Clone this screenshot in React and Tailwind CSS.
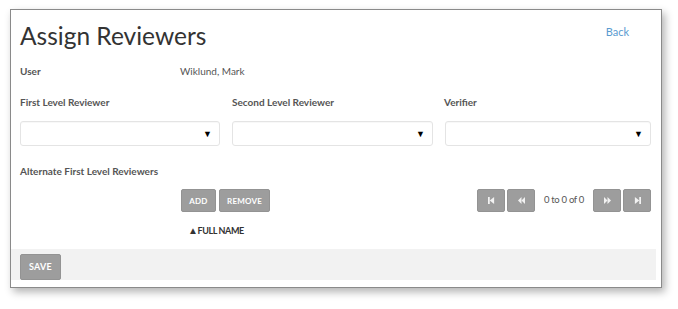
import React from 'react';

const font = { fontFamily: 'Lato, "Open Sans", sans-serif' };

const Select = ({ w }) => (
    <div className={`${w} h-[25px] rounded-[3px] border border-[#e4e4e4] bg-white flex items-center justify-end pr-[7px] shadow-[inset_0_1px_1px_rgba(0,0,0,0.03)]`}>
        <span className="text-[9px] leading-none text-black">▼</span>
    </div>
);

const GrayBtn = ({ children, className = '' }) => (
    <button className={`h-[23px] rounded-[2px] bg-[#9d9d9d] border border-[#939393] text-white text-[8px] font-bold tracking-[0.2px] flex items-center justify-center ${className}`}>
        {children}
    </button>
);

const PageIcon = ({ type }) => {
    const shapes = {
        first: (
            <>
                <rect x="0" y="0" width="2" height="8" />
                <polygon points="7,0 7,8 2,4" />
            </>
        ),
        prev: (
            <>
                <polygon points="4,0 4,8 0,4" />
                <polygon points="8,0 8,8 4,4" />
            </>
        ),
        next: (
            <>
                <polygon points="0,0 0,8 4,4" />
                <polygon points="4,0 4,8 8,4" />
            </>
        ),
        last: (
            <>
                <polygon points="1,0 1,8 6,4" />
                <rect x="6" y="0" width="2" height="8" />
            </>
        ),
    };
    return (
        <svg width="7" height="7" viewBox="0 0 8 8" fill="#f2f2f2">
            {shapes[type]}
        </svg>
    );
};

export default function App() {
    return (
        <div className="w-[678px] h-[309px] bg-white pt-[9px] pl-[10px]" style={font}>
            <div className="w-[652px] h-[279px] border border-[#8a8a8a] bg-white shadow-[3px_4px_8px_rgba(0,0,0,0.3)] flex flex-col">
                <div className="pl-[9px] pr-[10px] flex flex-col">
                    <div className="h-[47px] flex items-end justify-between">
                        <h1 className="text-[24.5px] leading-none text-[#333] pb-[9px]">Assign Reviewers</h1>
                        <a className="text-[11px] text-[#5a9bd0] mr-[22px] mb-[17px]">Back</a>
                    </div>
                    <div className="h-[28px] flex items-center text-[10px] text-[#555]">
                        <span className="w-[160px] font-bold">User</span>
                        <span>Wiklund, Mark</span>
                    </div>
                    <div className="h-[34px] flex items-center text-[10px] font-bold text-[#555]">
                        <span className="w-[212px]">First Level Reviewer</span>
                        <span className="w-[212px]">Second Level Reviewer</span>
                        <span>Verifier</span>
                    </div>
                    <div className="mt-[2px] flex gap-[12px]">
                        <Select w="w-[200px]" />
                        <Select w="w-[201px]" />
                        <Select w="w-[206px]" />
                    </div>
                    <div className="h-[47px] pt-[4px] flex items-center text-[10px] font-bold text-[#555]">
                        Alternate First Level Reviewers
                    </div>
                    <div className="flex items-center -mt-[4px]">
                        <div className="ml-[161px] flex gap-[3px]">
                            <GrayBtn className="w-[35px]">ADD</GrayBtn>
                            <GrayBtn className="w-[51px]">REMOVE</GrayBtn>
                        </div>
                        <div className="ml-auto flex items-center">
                            <GrayBtn className="w-[28px]"><PageIcon type="first" /></GrayBtn>
                            <GrayBtn className="w-[28px] ml-[2px]"><PageIcon type="prev" /></GrayBtn>
                            <span className="w-[58px] text-center text-[9.5px] text-[#555] tracking-[-0.3px]">0 to 0 of 0</span>
                            <GrayBtn className="w-[28px]"><PageIcon type="next" /></GrayBtn>
                            <GrayBtn className="w-[28px] ml-[2px]"><PageIcon type="last" /></GrayBtn>
                        </div>
                    </div>
                    <div className="h-[37px] flex items-center pl-[168px] text-[9px] font-bold text-[#333] tracking-[-0.4px]">
                        <span className="text-[10px]">▲</span>FULL NAME
                    </div>
                </div>
                <div className="mr-[5px] h-[31px] bg-[#f2f2f2] flex items-end pl-[9px]">
                    <GrayBtn className="w-[41px] h-[26px] text-[9px]">SAVE</GrayBtn>
                </div>
            </div>
        </div>
    );
}
